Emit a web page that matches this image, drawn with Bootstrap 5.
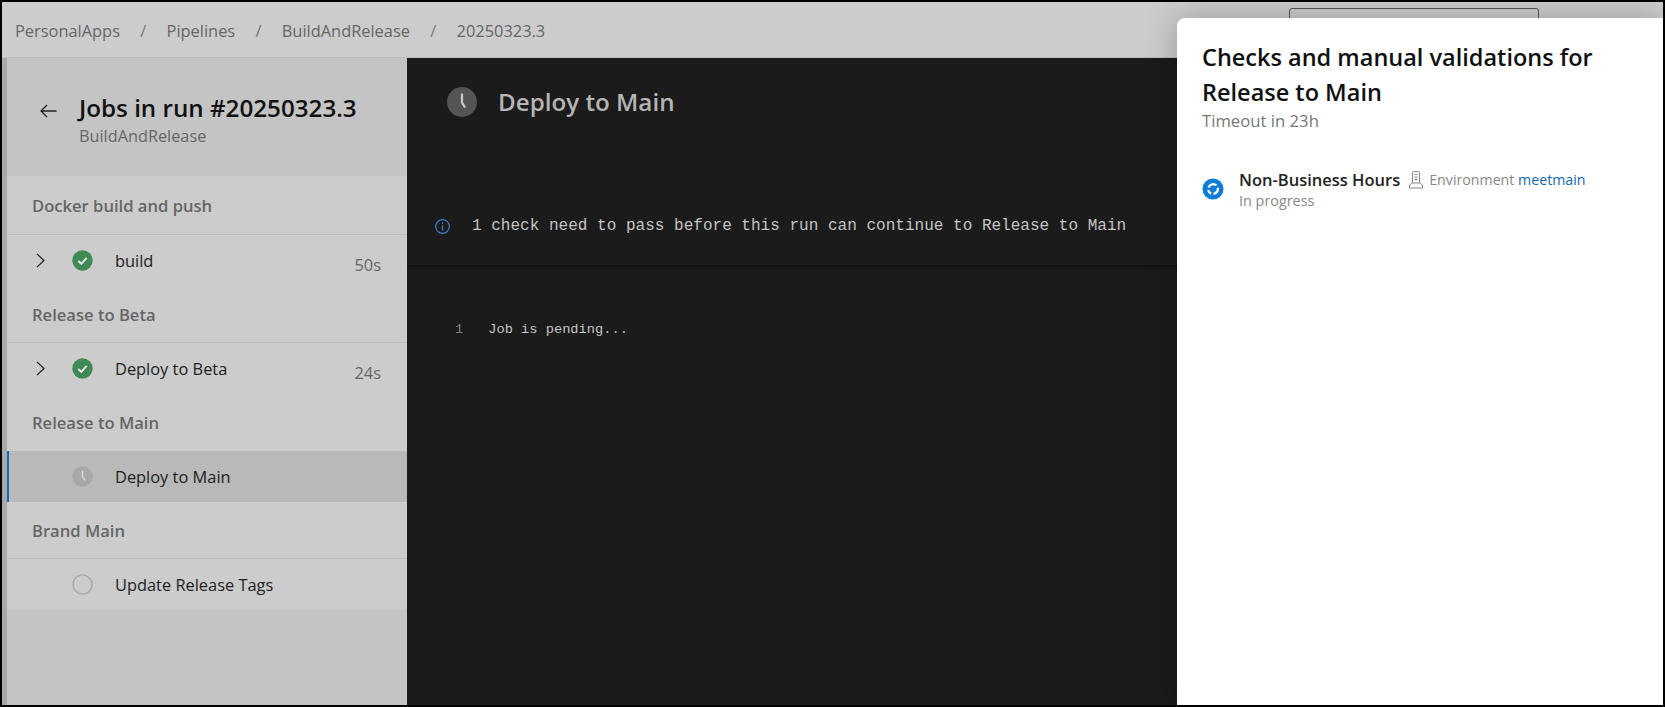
<!DOCTYPE html>
<html lang="en">
<head>
<meta charset="utf-8">
<title>Deploy to Main</title>
<link rel="stylesheet" href="https://cdn.jsdelivr.net/npm/bootstrap@5.3.0/dist/css/bootstrap.min.css">
<style>
html,body{height:100%;overflow:hidden}
body{background:#000;font-family:"Open Sans","Noto Sans",sans-serif;padding:2px;}
.shell{height:703px;background:#ccc;overflow:hidden;position:relative}
.topstrip{height:56px;background:#ccc;border-bottom:1px solid #bdbdbd;padding-left:13px;position:relative}
.crumbs{--bs-breadcrumb-margin-bottom:0;--bs-breadcrumb-item-padding-x:20.3px;--bs-breadcrumb-divider-color:#777;--bs-breadcrumb-item-active-color:#666;font-size:16.4px;line-height:57px}
.crumbs .breadcrumb-item{color:#666}
.ghostbtn{position:absolute;left:1287px;top:6px;width:250px;height:40px;border:1px solid #555;border-radius:3px}
.railstrip{width:5px;background:#a9a9a9}
.sidecol{width:400px;background:#c4c4c4}
.headbox{height:118px;padding:0 0 0 33px;background:#c4c4c4}
.headbox svg{margin-right:22px;margin-top:-12px}
.titleblock{padding-top:6px}
.jobtitle{font-size:24.2px;font-weight:600;color:#111;line-height:30px;margin:0 0 1px}
.jobsub{font-size:16.3px;color:#666;line-height:24px}
.stage{height:57px;background:#ccc;border-bottom:1px solid #bcbcbc;padding:2px 0 0 25px;font-size:16.6px;font-weight:600;color:#666}
.stage.tall{height:59px}
.stage.noline{border-bottom:0}
.jobrow{height:51px;background:#ccc;font-size:16.4px;color:#222;padding-left:29px;padding-right:26px}
.jobrow.picked{background:#b9b9b9;border-left:2px solid #0f6cbd;padding-left:27px}
.chevslot{width:36px;flex:none}
.iconslot{width:43px;flex:none}
.jobname{flex-grow:1;margin-top:2px}
.dur{color:#666;margin-top:10px}
.darkcol{background:#1b1b1b;color:#ccc;min-width:0;overflow:hidden}
.darkhead{height:127px;padding:29px 0 0 40px;color:#b5b5b5}
.darkhead h1{font-size:24.2px;font-weight:600;margin:0 0 0 21px;color:#b5b5b5}
.noticebar{height:80px;padding:2px 0 0 28px;box-shadow:0 2px 4px rgba(0,0,0,.45);font-family:"Liberation Mono",monospace;font-size:16.05px;color:#c4c4c4}
.noticebar svg{margin-right:22px}
.logline{margin:55px 0 0 48px;font-family:"Liberation Mono",monospace;font-size:13.7px;color:#c4c4c4;line-height:20px}
.logline span{color:#808080;margin-right:25px}
.sheet{position:absolute;left:1175px;top:16px;right:0;bottom:0;background:#fff;border-top-left-radius:8px;box-shadow:0 0 32px rgba(0,0,0,.25);padding:22px 25px}
.sheet h2{font-size:23.5px;font-weight:600;line-height:35px;margin:0;color:#111}
.sheetsub{font-size:16.7px;color:#777;line-height:24px;margin-top:-1px}
.checkrow{margin-top:35px}
.checkrow svg.spin{margin-right:15px;margin-top:-1px;flex:none}
.checkname{font-size:16.5px;font-weight:600;color:#222;line-height:23px}
.envglyph{margin:0 5px 0 8px}
.checkmeta{font-size:14.2px;color:#888}
.checkmeta a{color:#1568a8;text-decoration:none}
.checkstate{font-size:14.4px;color:#888;line-height:19px}
</style>
</head>
<body>
<div class="shell d-flex flex-column">
  <div class="topstrip flex-none">
    <ol class="breadcrumb crumbs">
      <li class="breadcrumb-item">PersonalApps</li>
      <li class="breadcrumb-item">Pipelines</li>
      <li class="breadcrumb-item">BuildAndRelease</li>
      <li class="breadcrumb-item active">20250323.3</li>
    </ol>
    <div class="ghostbtn"></div>
  </div>
  <div class="d-flex flex-grow-1">
    <div class="railstrip"></div>
    <div class="sidecol">
      <div class="headbox d-flex align-items-center">
        <svg width="17" height="14" viewBox="0 0 17 14" fill="none" stroke="#222" stroke-width="1.3"><path d="M16.5 7H1M7 1 1 7l6 6"/></svg>
        <div class="titleblock">
          <p class="jobtitle">Jobs in run #20250323.3</p>
          <div class="jobsub">BuildAndRelease</div>
        </div>
      </div>
      <div class="stage tall d-flex align-items-center">Docker build and push</div>
      <div class="jobrow d-flex align-items-center">
        <div class="chevslot"><svg class="d-block" width="9" height="15" viewBox="0 0 9 15" fill="none" stroke="#222" stroke-width="1.2"><path d="m1 1 7 6.5L1 14"/></svg></div>
        <div class="iconslot"><svg class="d-block" width="21" height="21" viewBox="0 0 21 21"><circle cx="10.5" cy="10.5" r="10.2" fill="#3f8a55"/><path d="m6.3 11 3 2.8 5.4-6" fill="none" stroke="#e6e6e6" stroke-width="2"/></svg></div>
        <div class="jobname">build</div>
        <div class="dur">50s</div>
      </div>
      <div class="stage d-flex align-items-center">Release to Beta</div>
      <div class="jobrow d-flex align-items-center">
        <div class="chevslot"><svg class="d-block" width="9" height="15" viewBox="0 0 9 15" fill="none" stroke="#222" stroke-width="1.2"><path d="m1 1 7 6.5L1 14"/></svg></div>
        <div class="iconslot"><svg class="d-block" width="21" height="21" viewBox="0 0 21 21"><circle cx="10.5" cy="10.5" r="10.2" fill="#3f8a55"/><path d="m6.3 11 3 2.8 5.4-6" fill="none" stroke="#e6e6e6" stroke-width="2"/></svg></div>
        <div class="jobname">Deploy to Beta</div>
        <div class="dur">24s</div>
      </div>
      <div class="stage noline d-flex align-items-center">Release to Main</div>
      <div class="jobrow picked d-flex align-items-center">
        <div class="chevslot"></div>
        <div class="iconslot"><svg class="d-block" width="21" height="21" viewBox="0 0 21 21"><circle cx="10.5" cy="10.5" r="10.2" fill="#a8a8a8"/><path d="M10.5 4.5v6.3l2.6 3.6" fill="none" stroke="#d8d8d8" stroke-width="1.6"/></svg></div>
        <div class="jobname">Deploy to Main</div>
      </div>
      <div class="stage d-flex align-items-center">Brand Main</div>
      <div class="jobrow d-flex align-items-center">
        <div class="chevslot"></div>
        <div class="iconslot"><svg class="d-block" width="21" height="21" viewBox="0 0 21 21"><circle cx="10.5" cy="10.5" r="9.6" fill="none" stroke="#a8a8a8" stroke-width="1.4"/></svg></div>
        <div class="jobname">Update Release Tags</div>
      </div>
    </div>
    <div class="darkcol flex-grow-1">
      <div class="darkhead d-flex align-items-start">
        <svg width="30" height="30" viewBox="0 0 30 30"><circle cx="15" cy="15" r="15" fill="#555"/><path d="M15 6.500v9l3 5" fill="none" stroke="#ccc" stroke-width="2.200"/></svg>
        <h1>Deploy to Main</h1>
      </div>
      <div class="noticebar d-flex align-items-center">
        <svg width="15" height="15" viewBox="0 0 15 15" fill="none" stroke="#3f7fd0" stroke-width="1.2"><circle cx="7.5" cy="7.5" r="6.8"/><path d="M7.5 6.5V11.500M7.500 3.500v1.400"/></svg>
        <span>1 check need to pass before this run can continue to Release to Main</span>
      </div>
      <div class="logline"><span>1</span>Job is pending...</div>
    </div>
  </div>
  <div class="sheet">
    <h2>Checks and manual validations for Release to Main</h2>
    <div class="sheetsub">Timeout in 23h</div>
    <div class="checkrow d-flex align-items-center">
      <svg class="spin" width="22" height="22" viewBox="0 0 22 22"><circle cx="11" cy="11" r="10.500" fill="#0f7cd8"/><g fill="none" stroke="#fff" stroke-width="2.400"><path d="M6.500 9.500A5 5 0 0 1 14.500 7.400"/><path d="M15.800 9.800A5 5 0 0 1 11.500 15.900"/><path d="M9.200 15.600A5 5 0 0 1 6.200 12"/></g></svg>
      <div>
        <div class="d-flex align-items-center"><span class="checkname">Non-Business Hours</span>
          <svg class="envglyph" width="16" height="18" viewBox="0 0 16 18" fill="none" stroke="#888" stroke-width="1"><path d="M4.500 1.500a1 1 0 0 1 1-1h5a1 1 0 0 1 1 1V12h-7zM6.500 3.500h3M6.500 6h3M6.500 8.500h3M4.500 12 1.500 14v3h13v-3l-3-2"/></svg>
          <span class="checkmeta">Environment <a href="#">meetmain</a></span></div>
        <div class="checkstate">In progress</div>
      </div>
    </div>
  </div>
</div>
<script src="https://cdn.jsdelivr.net/npm/bootstrap@5.3.0/dist/js/bootstrap.bundle.min.js"></script>
</body>
</html>
